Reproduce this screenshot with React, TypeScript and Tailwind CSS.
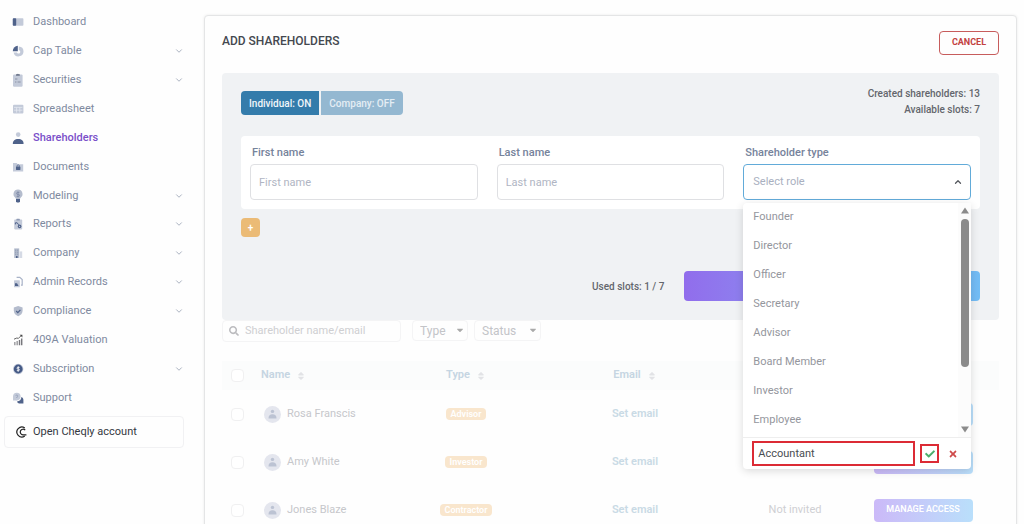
import { useState, type ReactNode } from "react";
import { FaCaretDown, FaCheck, FaSearch, FaSort, FaTimes } from "react-icons/fa";
import { ChevronDown, ChevronUp } from "lucide-react";

const light = "#c3cad9";
const dark = "#4f628a";

function Glyph({ children }: { children: ReactNode }) {
  return (
    <svg viewBox="0 0 12 12" className="size-3 shrink-0" aria-hidden="true">
      {children}
    </svg>
  );
}

const navItems: { label: string; icon: ReactNode; expandable?: boolean; active?: boolean }[] = [
  {
    label: "Dashboard",
    icon: (
      <Glyph>
        <rect x="0.8" y="2.2" width="10.6" height="7.6" rx="0.8" fill={light} />
        <rect x="0.8" y="2.2" width="3.4" height="7.6" rx="0.8" fill={dark} />
      </Glyph>
    ),
  },
  {
    label: "Cap Table",
    expandable: true,
    icon: (
      <Glyph>
        <path d="M6.8 1.4a5 5 0 1 1-5.2 6h3.200a1.800 1.800 0 1 0 2-2.400z" fill={light} />
        <path d="M5.800.8v5.400H.8A5.200 5.200 0 0 1 5.800.8z" fill={dark} />
      </Glyph>
    ),
  },
  {
    label: "Securities",
    expandable: true,
    icon: (
      <svg viewBox="0 0 12 14" className="h-3.5 w-3 shrink-0" aria-hidden="true">
        <rect x="1" y="1.4" width="9.6" height="12.4" rx="1.2" fill={light} />
        <path d="M4 1.2h1a1 1 0 0 1 1.8 0h1v1.6H4z" fill="#6b7488" />
        <path d="M3 6h2.4M3 9h1.4M5.6 9h3" stroke="#7e8799" strokeWidth="0.8" />
      </svg>
    ),
  },
  {
    label: "Spreadsheet",
    icon: (
      <Glyph>
        <rect x="1" y="1.8" width="10.4" height="8.6" rx="1" fill={light} />
        <path d="M2 4.4h8.4M2 7.2h8.4M4.6 4.4v5.2M7.8 4.4v5.2" stroke="#e9ecf3" strokeWidth="0.7" />
      </Glyph>
    ),
  },
  {
    label: "Shareholders",
    active: true,
    icon: (
      <Glyph>
        <circle cx="6.2" cy="2.6" r="2.3" fill={light} />
        <path d="M.8 12c0-3.4 2-5 5.4-5s5.4 1.600 5.400 5z" fill={dark} />
      </Glyph>
    ),
  },
  {
    label: "Documents",
    icon: (
      <Glyph>
        <path d="M1 2h3.600l1.200 1.200h5.400v7.400H1z" fill={light} />
        <rect x="4" y="5.6" width="4.400" height="3.400" rx="0.4" fill={dark} />
        <path d="M5 5.800V5a1.200 1.200 0 0 1 2.400 0v.8" stroke={dark} strokeWidth="0.7" fill="none" />
      </Glyph>
    ),
  },
  {
    label: "Modeling",
    expandable: true,
    icon: (
      <svg viewBox="0 0 12 14" className="h-3.5 w-3 shrink-0" aria-hidden="true">
        <path d="M6 .6a4.500 4.500 0 0 1 2.400 8.300L8 10H4l-.4-1.100A4.500 4.500 0 0 1 6 .6z" fill="#b4bccd" />
        <path d="M7.400 3.400H5.600a1 1 0 0 0 0 2h.9a1 1 0 0 1 0 2H4.600M6 2.400v6" stroke="#7683a0" strokeWidth="0.7" fill="none" />
        <path d="M4 10h4v2.200L7.200 13.600H4.800L4 12.200z" fill={dark} />
      </svg>
    ),
  },
  {
    label: "Reports",
    expandable: true,
    icon: (
      <Glyph>
        <rect x="2.200" y="1.600" width="8" height="9.800" rx="0.8" fill={light} />
        <rect x="4.400" y="0.8" width="3.400" height="1.600" rx="0.5" fill="#8f9bb5" />
        <path d="M3.400 4.800h1.800l1.400 2M3.400 4.800v1.600" stroke={dark} strokeWidth="1" fill="none" />
        <circle cx="7.600" cy="8.400" r="1.800" fill={dark} />
        <circle cx="7.600" cy="8.400" r="0.6" fill={light} />
      </Glyph>
    ),
  },
  {
    label: "Company",
    expandable: true,
    icon: (
      <Glyph>
        <rect x="2.200" y="1.400" width="5" height="9.600" fill="#b4bccd" />
        <path d="M7.600 4.400h2.600V11H7.600z" fill="#d5dae5" />
        <path d="M3.200 3.200h1M5.200 3.200h1M3.200 5.200h1M5.200 5.200h1M3.200 7.200h1M5.200 7.200h1" stroke="#7683a0" strokeWidth="0.7" />
        <path d="M4 9h1.600v2H4z" fill={dark} />
      </Glyph>
    ),
  },
  {
    label: "Admin Records",
    expandable: true,
    icon: (
      <Glyph>
        <path d="M4.600 1.400h3.200l2.400 2.200v5.600H9" fill="none" stroke="#a9b3c8" strokeWidth="1.200" />
        <rect x="2" y="4.200" width="5.800" height="7" rx="0.5" fill={light} />
        <path d="M3 7.200h2l1.600 2.800H3z" fill={dark} />
      </Glyph>
    ),
  },
  {
    label: "Compliance",
    expandable: true,
    icon: (
      <Glyph>
        <path d="M6.200 1l4.400 1.600v3.200c0 2.600-2 4.600-4.400 5.400-2.400-.8-4.400-2.800-4.400-5.400V2.600z" fill="#b4bccd" />
        <path d="M4.200 6l1.600 1.600 2.600-2.800" fill="none" stroke={dark} strokeWidth="1.200" />
      </Glyph>
    ),
  },
  {
    label: "409A Valuation",
    icon: (
      <Glyph>
        <path d="M2 5.200l2.800-1.200 1.600.4L9.200 1.600" fill="none" stroke="#555" strokeWidth="0.9" />
        <path d="M7.600.8h2.800v2.800z" fill="#444" />
        <path d="M2 8h1.600v3.200H2zM4.400 7H6v4.200H4.400z" fill="#a4a4a8" />
        <path d="M6.800 6h1.400v5.200H6.800zM9 4.600h1.400v6.600H9z" fill="#77777c" />
      </Glyph>
    ),
  },
  {
    label: "Subscription",
    expandable: true,
    icon: (
      <Glyph>
        <circle cx="6.200" cy="6" r="5.200" fill={light} />
        <circle cx="6.200" cy="6" r="4.400" fill="#455a86" />
        <path d="M7.600 4.400H5.800a.8.8 0 0 0 0 1.600h.8a.8.8 0 0 1 0 1.600H4.800M6.200 3.200v5.600" stroke="#fff" strokeWidth="0.8" fill="none" />
      </Glyph>
    ),
  },
  {
    label: "Support",
    icon: (
      <Glyph>
        <circle cx="4.800" cy="4.600" r="3.800" fill={light} />
        <path d="M1 4.600v4h4z" fill={light} />
        <path d="M3.800 4a1 1 0 1 1 1 1v1" stroke="#8f9bb5" strokeWidth="0.7" fill="none" />
        <path d="M9.400 5c1.400.6 2 1.600 2 3v3.400H8c-1.400 0-2.600-.6-3-2 2.600 0 4.400-1.800 4.400-4.400z" fill={dark} />
      </Glyph>
    ),
  },
];

const roles = ["Founder", "Director", "Officer", "Secretary", "Advisor", "Board Member", "Investor", "Employee"];

const shareholders: { name: string; type: string; status?: string }[] = [
  { name: "Rosa Franscis", type: "Advisor" },
  { name: "Amy White", type: "Investor" },
  { name: "Jones Blaze", type: "Contractor", status: "Not invited" },
];

function Sidebar() {
  return (
    <aside className="w-[204px] shrink-0 pt-2">
      <nav className="grid min-h-[404px] auto-rows-fr">
        {navItems.map((item) => (
          <a
            key={item.label}
            href="#"
            className={`flex items-center gap-[9px] pr-5 pl-3 text-[11px] leading-4 ${
              item.active ? "font-medium text-[#7a4fc9]" : "font-normal text-[#7f8aa0]"
            }`}
          >
            {item.icon}
            <span className="flex-1">{item.label}</span>
            {item.expandable && <ChevronDown className="size-2.5 text-[#9aa3b5]" strokeWidth={2} />}
          </a>
        ))}
      </nav>
      <a
        href="#"
        className="mt-1 mr-5 ml-1 flex h-8 items-center gap-[6px] rounded border border-[#f1f1f3] pl-2.5 text-[11px] font-normal text-[#34383f]"
      >
        <svg viewBox="0 0 12 12" className="size-3 shrink-0" fill="none" stroke="#222" aria-hidden="true">
          <path d="M9.800 1.900A5 5 0 1 0 9.800 10.100" strokeWidth="1.200" />
          <path d="M10.200 4.200A2.800 2.800 0 1 0 8 8.800h3.400" strokeWidth="1.200" />
        </svg>
        Open Cheqly account
      </a>
    </aside>
  );
}

function TextField({ id, label }: { id: string; label: string }) {
  return (
    <div className="flex flex-col gap-[3px]">
      <label htmlFor={id} className="pl-0.5 text-[11px] leading-4 font-medium text-[#76839b]">
        {label}
      </label>
      <input
        id={id}
        placeholder={label}
        className="h-9 w-full rounded-sm border border-[#dfe0e3] bg-white px-2 text-[11px] text-[#555] outline-none placeholder:text-[#b0b5c3]"
      />
    </div>
  );
}

function RoleMenu() {
  const [custom, setCustom] = useState("Accountant");
  return (
    <div className="absolute inset-x-0 top-full z-10 mt-[3px] rounded-sm bg-white shadow-[0_2px_8px_rgba(0,0,0,0.14)]">
      <div className="flex h-[234px]">
        <ul className="flex-1 overflow-hidden">
          {roles.map((role) => (
            <li key={role}>
              <button type="button" className="flex h-[29px] w-full items-center px-2.5 text-[11px] text-[#94969d]">
                {role}
              </button>
            </li>
          ))}
        </ul>
        <div className="flex w-[13px] flex-col items-center bg-[#fcfcfc] py-1" aria-hidden="true">
          <svg viewBox="0 0 8 7" className="h-[7px] w-2">
            <path d="M4 0.500L8 6.500H0z" fill="#8b8b8b" />
          </svg>
          <div className="mt-[5px] h-[148px] w-2 rounded-full bg-[#8b8b8b]" />
          <svg viewBox="0 0 8 7" className="mt-auto h-[7px] w-2">
            <path d="M4 6.500L8 0.500H0z" fill="#8b8b8b" />
          </svg>
        </div>
      </div>
      <div className="flex h-8 items-center border-t border-[#eeeeee] pl-[9px]">
        <input
          aria-label="Custom role"
          value={custom}
          onChange={(e) => setCustom(e.target.value)}
          className="h-[25px] w-[163px] min-w-0 border-2 border-[#dc2b35] px-1 text-[11px] text-[#4a4d52] outline-none"
        />
        <button
          type="button"
          aria-label="Save role"
          className="ml-[5px] flex size-[19px] items-center justify-center border-2 border-[#dc2b35] text-[#4cae6b]"
        >
          <FaCheck className="size-2.5" />
        </button>
        <button type="button" aria-label="Discard role" className="ml-[9px] flex size-[10px] items-center text-[#cf4b4b]">
          <FaTimes className="size-2.5" />
        </button>
      </div>
    </div>
  );
}

function AddPanel() {
  return (
    <section className="rounded-sm bg-[#f0f2f4] px-[19px] pt-[18px] pb-[19px]">
      <div className="flex h-[45px] items-start justify-between">
        <div className="flex gap-0.5 text-[10px] font-medium">
          <button type="button" className="h-6 rounded-l bg-[#347cab] px-2 text-[#f1f6fa]">
            Individual: ON
          </button>
          <button type="button" className="h-6 rounded-r bg-[#94b8d1] px-2 text-[#e4edf4]">
            Company: OFF
          </button>
        </div>
        <div className="-mt-[5px] text-right text-[10px] leading-4 font-medium text-[#63666c]">
          <p>Created shareholders: 13</p>
          <p>Available slots: 7</p>
        </div>
      </div>

      <div className="grid grid-cols-3 gap-[19px] rounded bg-white px-[9px] pt-[9px] pb-[9px]">
        <TextField id="first-name" label="First name" />
        <TextField id="last-name" label="Last name" />
        <div className="flex flex-col gap-[3px]">
          <label htmlFor="role" className="pl-0.5 text-[11px] leading-4 font-medium text-[#76839b]">
            Shareholder type
          </label>
          <div className="relative">
            <select
              id="role"
              className="block h-9 w-full appearance-none rounded-sm border border-[#62abd9] bg-white px-[9px] text-[11px] text-[#a9b0c0] outline-none"
            >
              <option>Select role</option>
            </select>
            <ChevronUp className="pointer-events-none absolute top-[13px] right-2 size-2.5 text-[#55585e]" strokeWidth={3} />
            <RoleMenu />
          </div>
        </div>
      </div>

      <button
        type="button"
        aria-label="Add another shareholder"
        className="mt-[9px] flex size-[19px] items-center justify-center rounded-sm bg-[#ebbb76] text-[10px] font-semibold text-white"
      >
        +
      </button>

      <div className="mt-[34px] flex items-center justify-end gap-5">
        <span className="text-[10px] font-medium text-[#63666c]">Used slots: 1 / 7</span>
        <button
          type="button"
          aria-label="Save shareholders"
          className="h-[30px] w-2/5 rounded bg-linear-to-r from-[#916dec] to-[#72bdf5]"
        />
      </div>
    </section>
  );
}

function Filters() {
  return (
    <div className="flex items-start">
      <label className="flex h-[22px] w-[179px] items-center gap-1.5 rounded-sm border border-[#f4f4f5] px-1.5">
        <FaSearch className="size-2.5 shrink-0 text-[#bcbcbf]" />
        <input
          aria-label="Search shareholders"
          placeholder="Shareholder name/email"
          className="w-full min-w-0 text-[11px] outline-none placeholder:text-[#cfcfd2]"
        />
      </label>
      {[
        { label: "Type", width: "ml-[11px] w-[56px]" },
        { label: "Status", width: "ml-1.5 w-[67px]" },
      ].map((filter) => (
        <div key={filter.label} className={`relative h-[21px] ${filter.width}`}>
          <select
            aria-label={filter.label}
            className="block h-full w-full appearance-none rounded-sm border border-[#f4f4f5] px-[7px] text-[12px] text-[#c3c4c8] outline-none"
          >
            <option>{filter.label}</option>
          </select>
          <FaCaretDown className="pointer-events-none absolute top-[5px] right-[3px] size-2.5 text-[#aaaaaa]" />
        </div>
      ))}
    </div>
  );
}

function Tick({ label }: { label: string }) {
  return (
    <input
      type="checkbox"
      aria-label={label}
      className="mx-auto block size-[13px] appearance-none rounded-sm border border-[#f0f0f1] bg-white"
    />
  );
}

function SortHead({ children }: { children: ReactNode }) {
  return (
    <span className="inline-flex items-center gap-1.5">
      {children}
      <FaSort className="size-2.5 text-[#e2e3e6]" />
    </span>
  );
}

function ShareholderTable() {
  return (
    <table className="mt-[19px] w-full table-fixed border-collapse text-[11px]">
      <colgroup>
        <col className="w-[30px]" />
        <col className="w-[153px]" />
        <col className="w-[122px]" />
        <col className="w-[216px]" />
        <col className="w-[104px]" />
        <col className="w-[152px]" />
      </colgroup>
      <thead>
        <tr className="h-[29px] bg-[#fbfcfc] text-[#c5d5e2]">
          <th>
            <Tick label="Select all" />
          </th>
          <th className="pl-[9px] text-left font-semibold">
            <SortHead>Name</SortHead>
          </th>
          <th className="font-semibold">
            <SortHead>Type</SortHead>
          </th>
          <th className="font-semibold">
            <SortHead>Email</SortHead>
          </th>
          <th />
          <th />
        </tr>
      </thead>
      <tbody>
        {shareholders.map((person) => (
          <tr key={person.name} className="h-12 text-center">
            <td>
              <Tick label={`Select ${person.name}`} />
            </td>
            <td className="pl-3 text-left text-[#c6c7cb]">
              <span className="flex items-center gap-1.5">
                <svg viewBox="0 0 17 17" className="size-[17px]" aria-hidden="true">
                  <circle cx="8.500" cy="8.500" r="8.500" fill="#e4e6ee" />
                  <circle cx="8.500" cy="5.400" r="1.700" fill="#bcc3d3" />
                  <path d="M4.500 12.400c0-3 1.500-4.200 4-4.200s4 1.200 4 4.200z" fill="#bcc3d3" />
                </svg>
                {person.name}
              </span>
            </td>
            <td>
              <span className="inline-block rounded-sm bg-[#f9e6cd] px-[5px] text-[9px] leading-3 font-semibold text-white">
                {person.type}
              </span>
            </td>
            <td>
              <a href="#" className="font-semibold text-[#c9dae5]">
                Set email
              </a>
            </td>
            <td className="text-[#cfcfd3]">{person.status}</td>
            <td>
              <button
                type="button"
                className="h-[23px] w-[99px] rounded-sm bg-linear-to-r from-[#cbb9f8] to-[#b9dffb] text-[9px] font-semibold text-white"
              >
                MANAGE ACCESS
              </button>
            </td>
          </tr>
        ))}
      </tbody>
    </table>
  );
}

export default function App() {
  return (
    <div className="flex h-screen overflow-hidden bg-[#fefefe] font-['Roboto',sans-serif]">
      <Sidebar />
      <main className="min-w-0 flex-1 pt-[15px] pr-[7px]">
        <div className="min-h-full rounded-sm border border-[#e4e5e6] bg-[#fefefe] px-[17px] pt-[15px] shadow-[0_0_3px_rgba(0,0,0,0.08)]">
          <header className="mb-[18px] flex items-start justify-between">
            <h1 className="pt-0.5 text-[12px] leading-4 font-medium text-[#44484f]">ADD SHAREHOLDERS</h1>
            <button
              type="button"
              className="h-6 w-[60px] rounded-sm border border-[#c75c5c] text-[9px] font-bold text-[#c24141]"
            >
              CANCEL
            </button>
          </header>
          <AddPanel />
          <Filters />
          <ShareholderTable />
        </div>
      </main>
    </div>
  );
}
